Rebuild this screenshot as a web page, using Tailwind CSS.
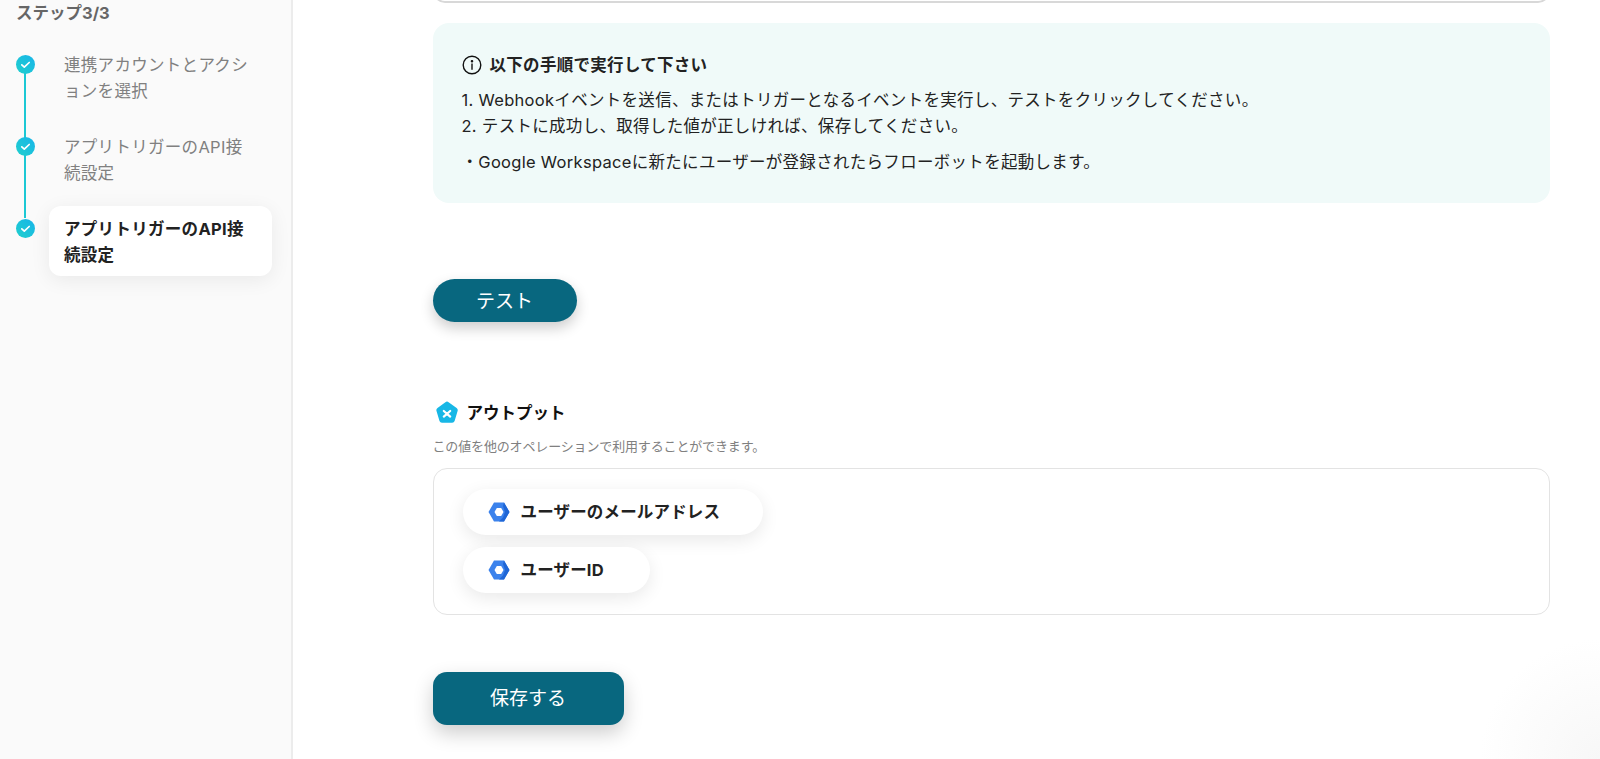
<!DOCTYPE html>
<html lang="ja">
<head>
  <meta charset="UTF-8" />
  <meta name="viewport" content="width=device-width, initial-scale=1.0"/>
  <title>アプリトリガーのAPI接続設定</title>
  <script src="https://cdn.jsdelivr.net/npm/@tailwindcss/browser@4"></script>
</head>
<body class="bg-white text-[#1c1c1c] h-screen overflow-hidden flex font-['Inter','Noto_Sans_CJK_JP',sans-serif]">

  <!-- サイドバー -->
  <aside class="w-[293px] shrink-0 h-full bg-[#fafafa] border-r-2 border-[#ececec] pl-4 pr-[19px]">
    <h2 class="text-[16.5px] font-bold text-[#666] leading-6 pt-[1px]">ステップ3/3</h2>

    <svg class="absolute w-0 h-0"><defs><linearGradient id="check-bg" x1="0" y1="1" x2="1" y2="0"><stop offset="0" stop-color="#1fd0cc"/><stop offset="1" stop-color="#18b4ea"/></linearGradient></defs></svg>

    <ol class="mt-[26px] tracking-[0.3px]">
      <li class="relative h-[82px] pl-12 pt-[1px] text-[16.5px] leading-[26px] text-[#808080]">
        <span class="absolute left-[8px] top-[13px] w-[2px] h-[82px] bg-[#1cc8d4]"></span>
        <svg class="absolute left-0 top-[4px] w-[19px] h-[19px]" viewBox="0 0 19 19"><circle cx="9.5" cy="9.5" r="9.5" fill="url(#check-bg)"/><path d="M5.8 9.8l2.5 2.4 4.9-4.7" fill="none" stroke="#fff" stroke-width="1.7" stroke-linecap="round" stroke-linejoin="round"/></svg>
        <p class="w-[190px]">連携アカウントとアクションを選択</p>
      </li>
      <li class="relative h-[82px] pl-12 pt-[1px] text-[16.5px] leading-[26px] text-[#808080]">
        <span class="absolute left-[8px] top-[13px] w-[2px] h-[72px] bg-[#1cc8d4]"></span>
        <svg class="absolute left-0 top-[4px] w-[19px] h-[19px]" viewBox="0 0 19 19"><circle cx="9.5" cy="9.5" r="9.5" fill="url(#check-bg)"/><path d="M5.8 9.8l2.5 2.4 4.9-4.7" fill="none" stroke="#fff" stroke-width="1.7" stroke-linecap="round" stroke-linejoin="round"/></svg>
        <p class="w-[190px]">アプリトリガーのAPI接続設定</p>
      </li>
      <li class="relative pl-[33px] -mt-[9px]">
        <svg class="absolute left-0 top-[13px] w-[19px] h-[19px]" viewBox="0 0 19 19"><circle cx="9.5" cy="9.5" r="9.5" fill="url(#check-bg)"/><path d="M5.8 9.8l2.5 2.4 4.9-4.7" fill="none" stroke="#fff" stroke-width="1.7" stroke-linecap="round" stroke-linejoin="round"/></svg>
        <div class="bg-white rounded-xl h-[70px] pl-[15px] pt-[10px] text-[16.5px] leading-[26px] font-bold text-[#222] shadow-[0_4px_20px_rgba(0,0,0,0.07)]"><p class="w-[190px]">アプリトリガーのAPI接続設定</p></div>
      </li>
    </ol>
  </aside>

  <!-- メイン -->
  <main class="flex-1 h-full pl-[139.5px] pr-[50px] bg-[radial-gradient(circle_at_100%_100%,#f7f7f7_0,#ffffff_120px)]">
    <div class="h-[3px] overflow-hidden">
      <div class="h-[30px] -mt-[27px] border-2 border-[#d8d8d8] rounded-xl"></div>
    </div>

    <!-- 手順 -->
    <section class="mt-5 h-[180px] bg-[#f0faf9] rounded-2xl pl-[29px] pt-[30px] text-[16.5px] tracking-[0.3px] text-[#222]">
      <h3 class="flex items-center gap-[8px] font-bold leading-6 mb-[10px]">
        <svg class="w-5 h-5" viewBox="0 0 20 20" fill="none" stroke="#111" stroke-width="1.4"><circle cx="10" cy="10" r="8.8"/><path d="M10 9v5.2" stroke-linecap="round"/><circle cx="10" cy="6.2" r="0.6" fill="#111"/></svg>
        以下の手順で実行して下さい
      </h3>
      <p class="leading-[26px]">1. Webhookイベントを送信、またはトリガーとなるイベントを実行し、テストをクリックしてください。</p>
      <p class="leading-[26px]">2. テストに成功し、取得した値が正しければ、保存してください。</p>
      <p class="leading-[26px] mt-[10px]">・Google Workspaceに新たにユーザーが登録されたらフローボットを起動します。</p>
    </section>

    <button class="block mt-[76px] w-[144px] h-[43px] pt-[3px] rounded-full bg-[#08677f] text-white text-[19px] shadow-[0_6px_14px_rgba(0,0,0,0.2)]">テスト</button>

    <!-- アウトプット -->
    <div class="flex items-center gap-[8px] mt-[79px] pl-[2px] h-6">
      <svg class="w-6 h-6" viewBox="0 0 24 24"><path d="M10.4 1.2a2.6 2.6 0 0 1 3.2 0l8 5.8a2.6 2.6 0 0 1 1 2.9l-3 10a2.6 2.6 0 0 1-2.5 1.8H7a2.6 2.6 0 0 1-2.5-1.8l-3-10a2.6 2.6 0 0 1 1-2.9z" fill="#17b7e6"/><path d="M8.8 10l6.4 5.6M15.2 10l-6.4 5.6" stroke="#fff" stroke-width="2.2" stroke-linecap="round"/></svg>
      <span class="font-bold text-[16.5px] text-[#111]">アウトプット</span>
    </div>
    <p class="text-[13px] tracking-[-0.15px] text-[#808080] mt-[11px] leading-5">この値を他のオペレーションで利用することができます。</p>

    <div class="mt-[12px] h-[147px] border border-[#e3e3e3] rounded-[14px] pl-[29px] pt-[20px] flex flex-col items-start gap-3">
      <div class="flex items-center h-[46px] w-[300px] pl-[25px] bg-white rounded-full shadow-[0_5px_18px_rgba(0,0,0,0.09)] font-bold text-[16.5px] tracking-[0.17px] text-[#222]">
        <svg class="w-[22px] h-[20px] mr-[11px]" viewBox="0 0 22 20"><path d="M6 0.5h10L21.5 10 16 19.5H6L0.5 10z" fill="#3b82ec"/><path d="M16 0.5L21.5 10 16 19.5h-5l4-4 2-5.5-2-6z" fill="#1f66d6"/><path d="M8.8 6h4.4l2.3 4-2.3 4H8.8L6.5 10z" fill="#fff"/></svg>
        ユーザーのメールアドレス
      </div>
      <div class="flex items-center h-[46px] w-[187px] pl-[25px] bg-white rounded-full shadow-[0_5px_18px_rgba(0,0,0,0.09)] font-bold text-[16.5px] tracking-[0.17px] text-[#222]">
        <svg class="w-[22px] h-[20px] mr-[11px]" viewBox="0 0 22 20"><path d="M6 0.5h10L21.5 10 16 19.5H6L0.5 10z" fill="#3b82ec"/><path d="M16 0.5L21.5 10 16 19.5h-5l4-4 2-5.5-2-6z" fill="#1f66d6"/><path d="M8.8 6h4.4l2.3 4-2.3 4H8.8L6.5 10z" fill="#fff"/></svg>
        ユーザーID
      </div>
    </div>

    <button class="block mt-[57px] w-[191px] h-[53px] pt-[2px] rounded-[14px] bg-[#08677f] text-white text-[19px] shadow-[0_8px_20px_rgba(0,0,0,0.2)]">保存する</button>
  </main>

</body>
</html>
